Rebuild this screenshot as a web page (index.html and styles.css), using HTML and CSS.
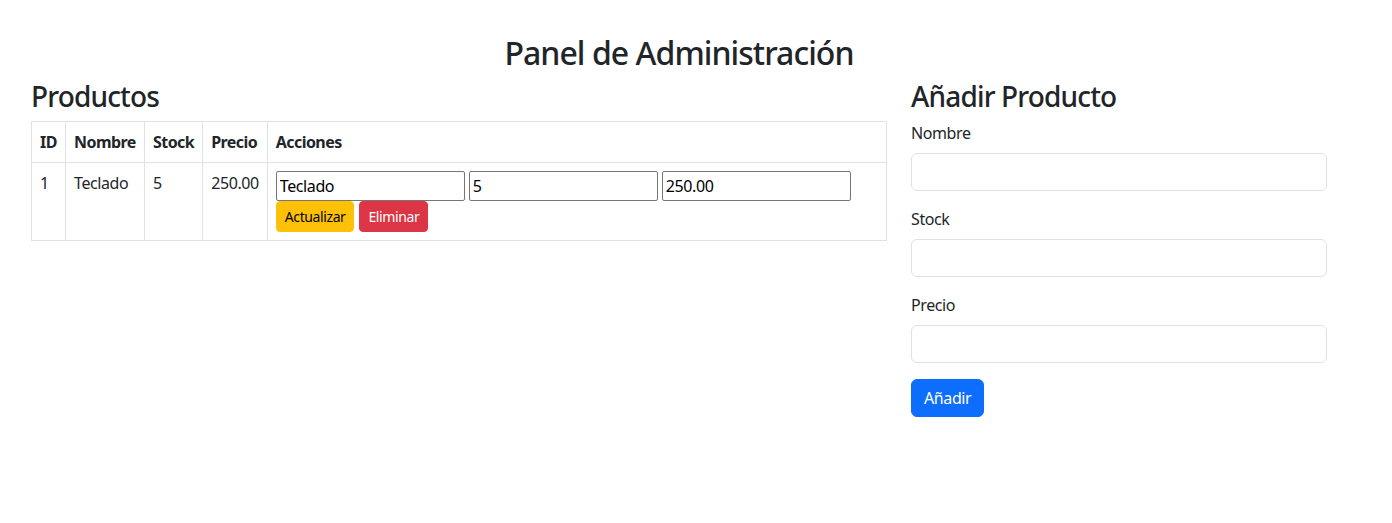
FILE: index.html
```html
<!DOCTYPE html>
<html lang="es">
<head>
<meta charset="utf-8">
<title>Panel de Administración</title>
<link rel="stylesheet" href="styles.css">
</head>
<body>
<div class="container">
  <h2 class="title">Panel de Administración</h2>
  <div class="row">
    <div class="col-main">
      <h3 class="section">Productos</h3>
      <table class="table">
        <thead>
          <tr>
            <th class="c-id">ID</th>
            <th class="c-nombre">Nombre</th>
            <th class="c-stock">Stock</th>
            <th class="c-precio">Precio</th>
            <th>Acciones</th>
          </tr>
        </thead>
        <tbody>
          <tr>
            <td>1</td>
            <td>Teclado</td>
            <td>5</td>
            <td>250.00</td>
            <td>
              <div class="inline-inputs">
                <input class="raw-input" type="text" value="Teclado">
                <input class="raw-input" type="number" value="5">
                <input class="raw-input" type="text" value="250.00">
              </div>
              <div class="actions">
                <button class="btn btn-sm btn-warning">Actualizar</button>
                <button class="btn btn-sm btn-danger">Eliminar</button>
              </div>
            </td>
          </tr>
        </tbody>
      </table>
    </div>
    <div class="col-side">
      <h3 class="section">Añadir Producto</h3>
      <form class="add-form">
        <div class="field">
          <label class="form-label">Nombre</label>
          <input class="form-control" type="text">
        </div>
        <div class="field">
          <label class="form-label">Stock</label>
          <input class="form-control" type="text">
        </div>
        <div class="field">
          <label class="form-label">Precio</label>
          <input class="form-control" type="text">
        </div>
        <button type="button" class="btn btn-primary">Añadir</button>
      </form>
    </div>
  </div>
</div>
</body>
</html>
```

FILE: styles.css
```css
* { box-sizing: border-box; }
html, body {
  margin: 0;
  padding: 0;
  background: #fff;
}
body {
  font-family: "Noto Sans", "Open Sans", sans-serif;
  font-size: 16px;
  line-height: 1.5;
  letter-spacing: -0.025em;
  color: #212529;
}
.container {
  width: 1320px;
  margin-left: 19px;
  padding: 34px 12px 0;
}
.title {
  margin: 0 0 7px;
  font-size: 32px;
  font-weight: 500;
  line-height: 1.2;
  text-align: center;
  letter-spacing: -0.03em;
}
.row {
  display: flex;
  margin: 0 -12px;
}
.col-main {
  width: 66.6667%;
  padding: 0 12px;
}
.col-side {
  width: 33.3333%;
  padding: 0 12px;
}
.section {
  margin: 0 0 7px;
  padding-top: 1px;
  font-size: 28px;
  font-weight: 500;
  line-height: 1.2;
  letter-spacing: -0.03em;
}
.table {
  width: 100%;
  border-collapse: collapse;
  border: 1px solid #dee2e6;
  margin-bottom: 16px;
}
.table th, .table td {
  border: 1px solid #dee2e6;
  padding: 8px;
  text-align: left;
  vertical-align: top;
}
.table th {
  font-weight: 700;
  letter-spacing: -0.035em;
}
.c-id { width: 34px; }
.c-nombre { width: 79px; }
.c-stock { width: 58px; }
.c-precio { width: 64px; }
.inline-inputs {
  display: flex;
  gap: 4px;
}
.raw-input {
  width: 189px;
  height: 30px;
  font: inherit;
  letter-spacing: inherit;
  line-height: 24px;
  color: #000;
  padding: 1px 3px;
  border: 1px solid #767676;
  border-radius: 2px;
  background: #fff;
  -moz-appearance: textfield;
}
.raw-input::-webkit-outer-spin-button,
.raw-input::-webkit-inner-spin-button { -webkit-appearance: none; margin: 0; }
.actions {
  display: flex;
  gap: 5px;
}
.btn {
  display: inline-block;
  font: inherit;
  letter-spacing: inherit;
  font-size: 16px;
  line-height: 1.5;
  padding: 6px 12px;
  border: 1px solid transparent;
  border-radius: 6px;
  cursor: pointer;
}
.btn-sm {
  font-size: 14px;
  padding: 4px 8px;
  border-radius: 4px;
}
.btn-warning { background: #ffc107; border-color: #ffc107; color: #000; }
.btn-danger { background: #dc3545; border-color: #dc3545; color: #fff; }
.btn-primary { background: #0d6efd; border-color: #0d6efd; color: #fff; }
.field {
  margin-bottom: 16px;
}
.form-label {
  display: inline-block;
  margin-bottom: 8px;
}
.form-control {
  display: block;
  width: 100%;
  height: 38px;
  padding: 6px 12px;
  font: inherit;
  color: #212529;
  border: 1px solid #dee2e6;
  border-radius: 6px;
  background: #fff;
}
```
